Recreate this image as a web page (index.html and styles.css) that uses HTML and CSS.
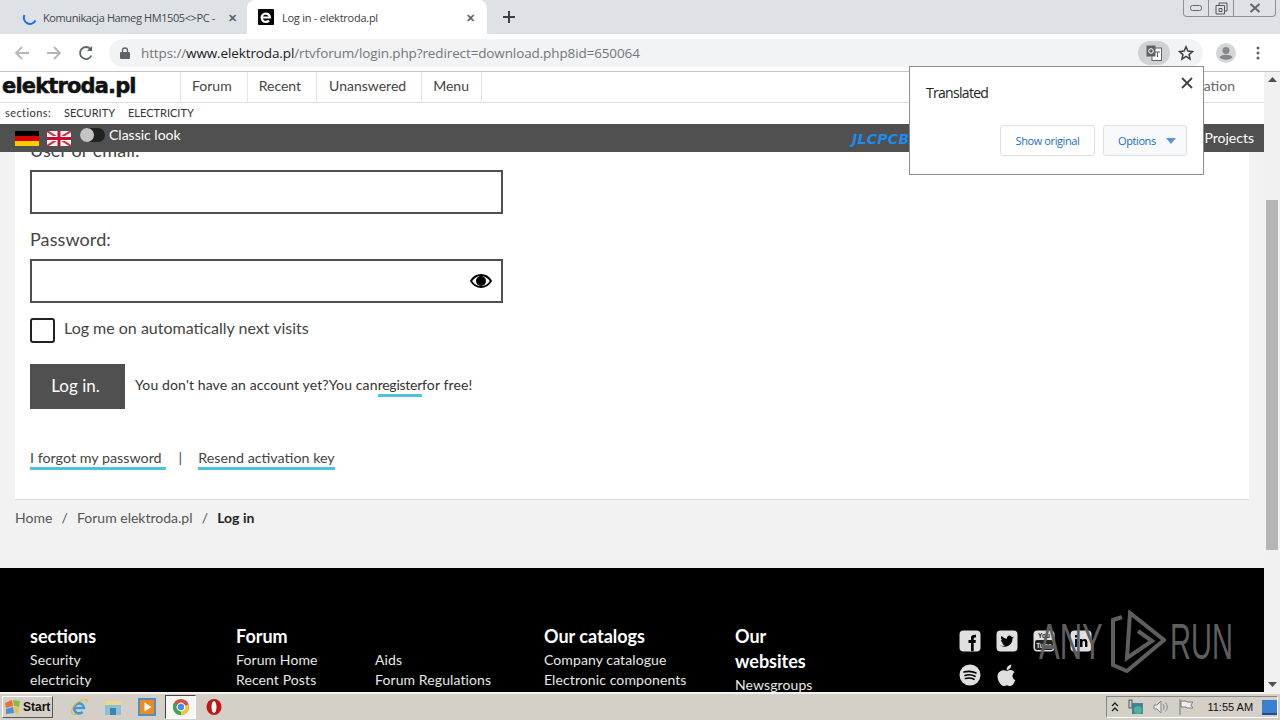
FILE: index.html
```html
<!DOCTYPE html>
<html>
<head>
    <title>Log in - elektroda.pl</title>
    <link rel="stylesheet" href="styles.css">
</head>
<body>
    <div class="tabstrip">
        <div class="tab">
            <svg class="tab-icon" width="16" height="16" viewBox="0 0 16 16"><path d="M2.500 6a6 6 0 0 0 11 5.500" fill="none" stroke="#1a73e8" stroke-width="2"/></svg>
            <span class="tab-title">Komunikacja Hameg HM1505&lt;&gt;PC -</span>
            <span class="tab-close">✕</span>
        </div>
        <div class="tab tab-active">
            <svg class="tab-icon" width="16" height="16" viewBox="0 0 16 16"><rect width="16" height="16" rx="1" fill="#000"/><path d="M3.500 8.500h8.500a4.200 4.200 0 1 0-1 3" fill="none" stroke="#fff" stroke-width="2.200"/></svg>
            <span class="tab-title">Log in - elektroda.pl</span>
            <span class="tab-close">✕</span>
        </div>
        <svg class="new-tab" width="14" height="14" viewBox="0 0 14 14"><path d="M7 1v12M1 7h12" stroke="#3c4043" stroke-width="2"/></svg>
        <div class="win-buttons">
            <span class="win-btn"><svg width="12" height="6" viewBox="0 0 12 6"><rect x=".5" y=".5" width="11" height="5" rx="2" fill="none" stroke="#666"/></svg></span>
            <span class="win-btn"><svg width="13" height="13" viewBox="0 0 13 13"><path d="M4 3V1h8v8h-2M1 3.500h8.500V12H1z M4 6.500h3v3H4z" fill="none" stroke="#555"/></svg></span>
            <span class="win-btn win-close"><svg width="12" height="10" viewBox="0 0 12 10"><path d="M1.500 1l9 8M10.500 1l-9 8" stroke="#666" stroke-width="2"/></svg></span>
        </div>
    </div>

    <div class="toolbar">
        <svg class="nav-icon" width="16" height="16" viewBox="0 0 16 16"><path d="M15 8H2M8 2 2 8l6 6" fill="none" stroke="#b4b7bb" stroke-width="1.800"/></svg>
        <svg class="nav-icon" width="16" height="16" viewBox="0 0 16 16"><path d="M1 8h13M8 2l6 6-6 6" fill="none" stroke="#b4b7bb" stroke-width="1.800"/></svg>
        <svg class="nav-icon" width="16" height="16" viewBox="0 0 16 16"><path d="M13.500 10.500A6 6 0 1 1 12.500 4" fill="none" stroke="#5f6368" stroke-width="1.800"/><path d="M14 1v5H9z" fill="#5f6368"/></svg>
        <div class="omnibox">
            <svg class="lock" width="10" height="12" viewBox="0 0 10 12"><path d="M2.500 5V3.500a2.500 2.500 0 0 1 5 0V5" fill="none" stroke="#5f6368" stroke-width="1.300"/><rect y="5" width="10" height="7" rx="1" fill="#5f6368"/></svg>
            <span class="url">https://<b>www.elektroda.pl</b>/rtvforum/login.php?redirect=download.php8id=650064</span>
            <span class="omni-right">
                <span class="translate-btn"><svg width="16" height="16" viewBox="0 0 16 16"><rect x="6" y="3" width="9.500" height="12.500" fill="#fff" stroke="#5f6368"/><rect x=".5" y=".5" width="9" height="11" fill="#5f6368"/><circle cx="5" cy="6" r="2.300" fill="none" stroke="#fff"/><path d="M9 7h5M11.500 7v5" stroke="#5f6368"/></svg></span>
                <svg class="star" width="16" height="16" viewBox="0 0 16 16"><path d="m8 1.800 1.900 4.200 4.600.5-3.400 3.100.9 4.500L8 11.300l-4 2.800.9-4.500L1.500 6.500 6.100 6z" fill="none" stroke="#3c4043" stroke-width="1.500"/></svg>
            </span>
        </div>
        <svg class="avatar" width="20" height="20" viewBox="0 0 20 20"><circle cx="10" cy="10" r="10" fill="#d5d6d8"/><circle cx="10" cy="7.500" r="3.500" fill="#85888c"/><path d="M3.500 14c2-3 11-3 13 0-2 3.500-11 3.500-13 0z" fill="#85888c"/></svg>
        <svg class="menu-dots" width="4" height="14" viewBox="0 0 4 14"><circle cx="2" cy="2" r="1.500" fill="#5f6368"/><circle cx="2" cy="7" r="1.500" fill="#5f6368"/><circle cx="2" cy="12" r="1.500" fill="#5f6368"/></svg>
    </div>

    <div class="viewport">
        <div class="page">
            <header class="site-head">
                <div class="logo">elektroda.pl</div>
                <nav class="main-nav">
                    <a>Forum</a>
                    <a>Recent</a>
                    <a>Unanswered</a>
                    <a>Menu</a>
                </nav>
                <span class="nav-right">Registration</span>
            </header>
            <div class="sections-bar">
                <span class="sections-label">sections:</span>
                <a>SECURITY</a>
                <a>ELECTRICITY</a>
            </div>
            <div class="dark-bar">
                <svg class="flag" width="24" height="15" viewBox="0 0 24 15"><rect width="24" height="5" fill="#000"/><rect y="5" width="24" height="5" fill="#d00"/><rect y="10" width="24" height="5" fill="#fc0"/></svg>
                <svg class="flag" width="24" height="15" viewBox="0 0 24 15"><rect width="24" height="15" fill="#f2eef0"/><path d="M0 0l24 15M24 0 0 15" stroke="#c8324a" stroke-width="2"/><path d="M12 0v15M0 7.500h24" stroke="#fff" stroke-width="5"/><path d="M12 0v15M0 7.500h24" stroke="#c8102e" stroke-width="3"/></svg>
                <span class="toggle"><span class="toggle-knob"></span></span>
                <span class="classic">Classic look</span>
                <span class="jlc">JLCPCB</span>
                <span class="projects">Projects</span>
            </div>
            <main class="content">
                <form class="card">
                    <label class="field-label field-label-first">User or email:</label>
                    <div class="text-input"></div>
                    <label class="field-label">Password:</label>
                    <div class="text-input">
                        <svg class="eye" width="22" height="14" viewBox="0 0 22 14"><path d="M1 7c5-8 15-8 20 0-5 8-15 8-20 0z" fill="none" stroke="#000" stroke-width="1.800"/><circle cx="11" cy="7" r="5" fill="#000"/></svg>
                    </div>
                    <div class="remember">
                        <span class="checkbox"></span>
                        <span class="remember-text">Log me on automatically next visits</span>
                    </div>
                    <div class="submit-row">
                        <span class="submit">Log in.</span>
                        <span class="register-text">You don't have an account yet?You can<a class="cyan-link">register</a>for free!</span>
                    </div>
                    <div class="help-links">
                        <a class="cyan-link">I forgot my password</a>
                        <span class="pipe">|</span>
                        <a class="cyan-link">Resend activation key</a>
                    </div>
                </form>
                <div class="crumbs">
                    <a>Home</a><span class="slash">/</span><a>Forum elektroda.pl</a><span class="slash">/</span><b>Log in</b>
                </div>
            </main>
            <footer class="site-foot">
                <div class="foot-col foot-sections">
                    <h3>sections</h3>
                    <a>Security</a>
                    <a>electricity</a>
                </div>
                <div class="foot-col foot-forum">
                    <h3>Forum</h3>
                    <a>Forum Home</a>
                    <a>Recent Posts</a>
                </div>
                <div class="foot-col foot-aids">
                    <a>Aids</a>
                    <a>Forum Regulations</a>
                </div>
                <div class="foot-col foot-catalogs">
                    <h3>Our catalogs</h3>
                    <a>Company catalogue</a>
                    <a>Electronic components</a>
                </div>
                <div class="foot-col foot-sites">
                    <h3>Our websites</h3>
                    <a>Newsgroups</a>
                </div>
                <div class="social">
                    <svg width="22" height="22" viewBox="0 0 22 22"><rect width="21" height="21" x=".5" y=".5" rx="4" fill="#e0e0e0"/><path d="M12 21v-8H9.500V10H12V8c0-2.500 1.500-3.500 5-3.300v2.700c-2 0-2.300.3-2.300 1V10h2.200l-.4 3h-1.800v8z" fill="#000"/></svg>
                    <svg width="22" height="22" viewBox="0 0 22 22"><rect width="21" height="21" x=".5" y=".5" rx="4" fill="#e0e0e0"/><path d="M4 15.500c3 2 10 2 12-4 .3-1 .4-2 .4-3L18 6.800l-2 .5-1-1.300c-2-1.500-4.500.3-4 2.800-2 0-4-1-5.500-3-1 2-.3 3.500.8 4.500l-1.300-.3c0 1.500 1 2.800 2.500 3.200l-1.300.1c.5 1.200 1.500 1.800 2.800 2-1.300.8-3 .9-5 .2z" fill="#000"/></svg>
                    <svg width="22" height="22" viewBox="0 0 22 22"><rect width="21" height="21" x=".5" y=".5" rx="4" fill="#e0e0e0"/><rect x="2" y="10" width="18" height="10" rx="2" fill="#222"/><text class="yt-you" x="11" y="8">You</text><text class="yt-tube" x="11" y="17.500">Tube</text></svg>
                    <svg width="22" height="22" viewBox="0 0 22 22"><rect width="21" height="21" x=".5" y=".5" rx="4" fill="#e0e0e0"/><path d="M5 9h2.500v8H5zM5 5h2.500v2.500H5zM10 9h2.400v1.200c1.500-2 5-1.600 5 1.800v5H15v-4.500c0-2-2.500-2-2.500 0V17H10z" fill="#000"/></svg>
                    <svg width="22" height="22" viewBox="0 0 22 22"><circle cx="11" cy="11" r="10.500" fill="#e0e0e0"/><path d="M5 8c4-1 8-1 12 1M6 11.500c3-1 7-.8 10 .8M6.500 14.500c3-.8 6-.5 8.500.8" fill="none" stroke="#000" stroke-width="1.600" stroke-linecap="round"/></svg>
                    <svg width="22" height="24" viewBox="0 0 22 24"><path d="M11 7c2-1.200 5-1.500 7.500 1.200-3 2-2.500 6.500.8 7.800-1 3-3 6-5 6-1.500 0-2-.8-3.300-.8s-2 .8-3.300.8C5 22 1.500 16.500 1.500 12.500 1.500 7.500 6.500 5 11 7z" fill="#e0e0e0"/><path d="M10.500 6c0-3 2-5 4.800-5.500.2 3-2 5.500-4.800 5.500z" fill="#e0e0e0"/></svg>
                </div>
            </footer>
        </div>
        <div class="scrollbar">
            <span class="sb-arrow"><svg width="9" height="5" viewBox="0 0 9 5"><path d="M4.500 0 9 5H0z" fill="#505050"/></svg></span>
            <div class="sb-track"><div class="sb-thumb"></div></div>
            <span class="sb-arrow"><svg width="9" height="5" viewBox="0 0 9 5"><path d="M0 0h9L4.500 5z" fill="#505050"/></svg></span>
        </div>

        <div class="translate-popup">
            <div class="popup-title">Translated</div>
            <svg class="popup-close" width="12" height="12" viewBox="0 0 12 12"><path d="M1 1l10 10M11 1 1 11" stroke="#444" stroke-width="1.800"/></svg>
            <div class="popup-buttons">
                <span class="popup-btn">Show original</span>
                <span class="popup-btn popup-options">Options<i class="caret"></i></span>
            </div>
        </div>
    </div>

    <div class="watermark">
        <span class="wm-any">ANY</span>
        <svg width="56" height="63" viewBox="0 0 56 63"><path d="M12 7 3 10v45l14 6 37-31L20 3l-3 45 25-17-14-10" fill="none" stroke="#5e5e5e" stroke-width="4"/></svg>
        <span class="wm-run">RUN</span>
    </div>

    <div class="taskbar">
        <span class="start">
            <svg width="18" height="16" viewBox="0 0 18 16"><path d="M1 4l7-3 1 6-7 2z" fill="#e8703a"/><path d="M9 1l7 1-1 6-5-1z" fill="#8dbb3f"/><path d="M2 10l7-2 1 6-8 1z" fill="#4b8fd6"/><path d="M10 8l5 1-1 6-3-1z" fill="#e8c23a"/></svg>
            Start
        </span>
        <svg class="quick" width="18" height="18" viewBox="0 0 18 18"><path d="M4 10h10a5 5 0 1 0-1.500 4" fill="none" stroke="#3d9ad6" stroke-width="2.600"/><path d="M2 15C0 11 6 3 15 1.500c2-.3 2.500 1 1.500 3M2 15c1 2 3 2 5 1" fill="none" stroke="#e4b93c" stroke-width="1.200"/></svg>
        <svg class="quick" width="18" height="18" viewBox="0 0 18 18"><rect x="1" y="3" width="16" height="5" fill="#ecd989"/><rect x="1" y="7" width="16" height="10" fill="#8cc0d8"/><rect x="6" y="10" width="6" height="7" fill="#3f85a8"/></svg>
        <svg class="quick quick-media" width="18" height="18" viewBox="0 0 18 18"><rect x="1" y="1" width="16" height="16" fill="#f08a1d" stroke="#4f8fc7" stroke-width="2"/><path d="M6.500 4.500v9L13.500 9z" fill="#fff"/></svg>
        <span class="task-active">
            <svg width="16" height="16" viewBox="0 0 16 16"><circle cx="8" cy="8" r="8" fill="#dd4b3e"/><path d="M8 8 15.500 5.500A8 8 0 0 1 8 16z" fill="#f5c533"/><path d="M8 8 8 16A8 8 0 0 1 1 4z" fill="#3ba55c"/><circle cx="8" cy="8" r="3.800" fill="#4a8af4" stroke="#fff" stroke-width="1.200"/></svg>
        </span>
        <svg class="quick" width="16" height="18" viewBox="0 0 16 18"><ellipse cx="8" cy="9" rx="7.500" ry="8" fill="#c01818"/><ellipse cx="8" cy="9" rx="2.500" ry="6" fill="#fff"/></svg>
        <div class="tray">
            <svg width="8" height="10" viewBox="0 0 8 10"><path d="M1 4l3-3 3 3M1 9l3-3 3 3" fill="none" stroke="#222" stroke-width="1.400"/></svg>
            <svg width="16" height="16" viewBox="0 0 16 16"><rect x="1" y="1" width="3" height="8" fill="none" stroke="#555"/><rect x="4" y="4" width="11" height="11" fill="#3e7fa0"/><circle cx="10" cy="11" r="4" fill="#4fb39a"/></svg>
            <svg width="16" height="14" viewBox="0 0 16 14"><path d="M1 5h3l4-4v12L4 9H1z" fill="#e8e8e8" stroke="#888"/><path d="M10 4c1.500 2 1.500 4 0 6M12.500 2.500c2.500 3 2.500 6 0 9" fill="none" stroke="#888"/></svg>
            <svg width="16" height="16" viewBox="0 0 16 16"><path d="M2 0v16" stroke="#777"/><path d="M3 2h5l1 1h6l-2 3 2 3H9L8 8H3z" fill="#efefef" stroke="#777"/></svg>
            <span class="clock">11:55 AM</span>
            <span class="show-desktop"></span>
        </div>
    </div>
</body>
</html>
```

FILE: styles.css
```css
html, body {
    margin: 0;
    height: 720px;
    overflow: hidden;
}
body {
    position: relative;
    display: flex;
    flex-direction: column;
    font-family: Lato, Arial, sans-serif;
    color: #333;
    background: #fff;
}
a {
    color: inherit;
}

/* browser chrome */
.tabstrip {
    height: 34px;
    flex: none;
    display: flex;
    align-items: stretch;
    padding-left: 8px;
    background: #dee1e6;
    font-family: "Open Sans", Arial, sans-serif;
    font-size: 11px;
    letter-spacing: -0.4px;
    color: #45484c;
}
.tab {
    width: 239px;
    box-sizing: border-box;
    display: flex;
    align-items: center;
    padding: 0 10px 0 14px;
}
.tab-active {
    width: 240px;
    padding: 0 12px 0 11px;
    background: #fff;
    border-radius: 8px 8px 0 0;
    color: #3c4043;
    letter-spacing: -0.25px;
}
.tab-icon {
    flex: none;
    margin-right: 5px;
}
.tab-active .tab-icon {
    margin-right: 8px;
}
.tab-title {
    flex: 1;
    white-space: nowrap;
    overflow: hidden;
}
.tab-close {
    font-size: 11px;
    font-weight: bold;
    color: #5f6368;
}
.new-tab {
    align-self: center;
    margin-left: 15px;
}
.win-buttons {
    margin-left: auto;
    margin-right: 4px;
    display: flex;
    align-self: flex-start;
    height: 16px;
    border: 1px solid #8b8f96;
    border-top: 0;
    border-radius: 0 0 4px 4px;
}
.win-btn {
    width: 24px;
    display: flex;
    align-items: center;
    justify-content: center;
    border-left: 1px solid #8b8f96;
}
.win-btn:first-child {
    border-left: 0;
}
.win-close {
    width: 41px;
}
.toolbar {
    height: 38px;
    flex: none;
    box-sizing: border-box;
    display: flex;
    align-items: center;
    padding: 0 0 0 14px;
    background: #fff;
    border-bottom: 1px solid #c4c4c4;
}
.nav-icon {
    flex: none;
    margin-right: 16px;
}
.omnibox {
    width: 1094px;
    height: 28px;
    flex: none;
    margin-left: -1px;
    padding-left: 11px;
    box-sizing: border-box;
    display: flex;
    align-items: center;
    background: #f1f3f4;
    border-radius: 14px;
    font-family: "Open Sans", Arial, sans-serif;
    font-size: 13.5px;
    letter-spacing: -0.12px;
    color: #73777b;
}
.lock {
    margin-right: 11px;
}
.url b {
    font-weight: normal;
    color: #202124;
}
.omni-right {
    margin-left: auto;
    display: flex;
    align-items: center;
}
.translate-btn {
    width: 32px;
    height: 24px;
    border-radius: 12px;
    background: #d0d2d4;
    display: flex;
    align-items: center;
    justify-content: center;
}
.star {
    margin: 0 9px 0 8px;
}
.avatar {
    margin-left: 13px;
    flex: none;
}
.menu-dots {
    margin-left: 20px;
    flex: none;
}

/* page */
.viewport {
    flex: 1;
    min-height: 0;
    display: flex;
    position: relative;
}
.page {
    flex: 1;
    min-width: 0;
    display: flex;
    flex-direction: column;
    background: #f2f2f2;
}
.site-head {
    height: 31px;
    flex: none;
    box-sizing: border-box;
    display: flex;
    align-items: stretch;
    padding-left: 2px;
    background: #fff;
    border-bottom: 1px solid #ddd;
}
.logo {
    width: 178px;
    font-family: "DejaVu Sans", Arial, sans-serif;
    font-weight: bold;
    font-size: 21px;
    letter-spacing: -0.85px;
    line-height: 28px;
    color: #111;
    -webkit-text-stroke: 0.5px #111;
}
.main-nav {
    display: flex;
    font-size: 14px;
    color: #444;
    line-height: 28px;
}
.main-nav a {
    padding: 0 15px 0 12px;
    border-left: 1px solid #e4e4e4;
}
.main-nav a:first-child {
    padding: 0 15px 0 11px;
}
.main-nav a:nth-child(2) {
    padding-left: 11px;
}
.main-nav a:last-child {
    padding: 0 12px 0 11px;
    border-right: 1px solid #e4e4e4;
}
.nav-right {
    margin-left: auto;
    margin-right: 29px;
    font-size: 14px;
    line-height: 28px;
    color: #666;
}
.sections-bar {
    height: 21px;
    flex: none;
    box-sizing: border-box;
    display: flex;
    align-items: center;
    padding: 0 0 2px 5px;
    background: #fff;
    font-size: 11px;
    color: #333;
}
.sections-bar a {
    margin-left: 13px;
}
.sections-label {
    letter-spacing: 0.42px;
}
.dark-bar {
    height: 28px;
    flex: none;
    position: relative;
    z-index: 1;
    display: flex;
    align-items: center;
    padding-left: 15px;
    background: #505050;
    font-size: 14px;
    color: #fff;
}
.flag {
    margin-right: 8px;
}
.flag + .flag {
    margin-right: 9px;
}
.toggle {
    width: 25px;
    height: 14px;
    margin-right: 4px;
    margin-top: -6px;
    border-radius: 7px;
    background: #222;
    position: relative;
}
.toggle-knob {
    position: absolute;
    left: 0;
    top: 0;
    width: 14px;
    height: 14px;
    border-radius: 50%;
    background: #c4c4c4;
}
.classic {
    margin-top: -8px;
}
.jlc {
    position: absolute;
    left: 852px;
    top: 7px;
    font-family: "DejaVu Sans", Arial, sans-serif;
    font-size: 14px;
    font-weight: bold;
    font-style: italic;
    letter-spacing: 0.3px;
    color: #1a8cf0;
}
.projects {
    margin-left: auto;
    margin-right: 10px;
    margin-top: -2px;
}
.content {
    height: 416px;
    flex: none;
    padding: 0 15px;
    overflow: hidden;
}
.card {
    display: flow-root;
    height: 348px;
    box-sizing: border-box;
    padding: 0 15px;
    background: #fff;
    border-bottom: 1px solid #ddd;
    font-size: 16px;
}
.field-label {
    display: block;
    height: 29px;
    margin-top: 16px;
    font-size: 18px;
    letter-spacing: 0.1px;
    line-height: 19px;
    color: #444;
}
.field-label-first {
    margin-top: -11px;
}
.text-input {
    width: 473px;
    height: 44px;
    box-sizing: border-box;
    border: 2px solid #505050;
    display: flex;
    align-items: center;
    justify-content: flex-end;
    padding-right: 9px;
}
.remember {
    display: flex;
    align-items: center;
    margin-top: 15px;
    gap: 9px;
    color: #444;
}
.remember-text {
    margin-top: -7px;
}
.checkbox {
    width: 25px;
    height: 25px;
    box-sizing: border-box;
    border: 2px solid #222;
    border-radius: 3px;
}
.submit-row {
    display: flex;
    align-items: center;
    margin-top: 21px;
}
.submit {
    width: 95px;
    height: 45px;
    box-sizing: border-box;
    padding-right: 4px;
    line-height: 43px;
    text-align: center;
    background: #505050;
    color: #fff;
    font-size: 17px;
}
.register-text {
    margin: -4px 0 0 10px;
    font-size: 14px;
    letter-spacing: 0.13px;
}
.cyan-link {
    padding-bottom: 1px;
    border-bottom: 3px solid #4cc3dd;
}
.register-text .cyan-link {
    letter-spacing: -0.25px;
}
.help-links {
    display: flex;
    align-items: baseline;
    margin-top: 40px;
    font-size: 14.3px;
    color: #444;
}
.help-links .cyan-link:first-child {
    padding-right: 4px;
}
.pipe {
    margin: 0 16px 0 13px;
}
.crumbs {
    margin-top: 9px;
    font-size: 14px;
    color: #555;
}
.crumbs b {
    color: #222;
}
.slash {
    margin: 0 9.2px;
}

/* footer */
.site-foot {
    flex: 1;
    min-height: 0;
    overflow: hidden;
    display: flex;
    align-items: flex-start;
    padding: 56px 0 0 30px;
    background: #000;
    color: #e8e8e8;
    font-size: 14px;
    letter-spacing: 0.1px;
    line-height: 20px;
}
.foot-col h3 {
    margin: 0 0 1px;
    font-size: 18px;
    line-height: 25px;
    font-weight: bold;
    letter-spacing: 0;
    color: #fff;
}
.foot-col a {
    display: block;
}
.foot-sections {
    width: 206px;
}
.foot-forum {
    width: 139px;
}
.foot-aids {
    width: 169px;
    padding-top: 26px;
}
.foot-catalogs {
    width: 191px;
}
.foot-sites {
    width: 85px;
}
.social {
    width: 150px;
    margin: 6px 0 0 139px;
    display: flex;
    flex-wrap: wrap;
    gap: 12px 15px;
}
.yt-you, .yt-tube {
    font-family: "Liberation Sans", Arial, sans-serif;
    font-size: 6.5px;
    font-weight: bold;
    text-anchor: middle;
}
.yt-you {
    fill: #222;
}
.yt-tube {
    fill: #e0e0e0;
}
.scrollbar {
    width: 16px;
    flex: none;
    display: flex;
    flex-direction: column;
    background: #f1f1f1;
}
.sb-arrow {
    height: 15px;
    flex: none;
    display: flex;
    align-items: center;
    justify-content: center;
}
.sb-track {
    flex: 1;
    padding-top: 113px;
}
.sb-thumb {
    height: 350px;
    margin: 0 2px;
    background: #b5b5b5;
}

/* translate bubble */
.translate-popup {
    position: absolute;
    left: 909px;
    top: -6px;
    width: 295px;
    height: 109px;
    box-sizing: border-box;
    background: #fff;
    border: 1px solid #8c8c8c;
    font-family: "Open Sans", Arial, sans-serif;
    z-index: 2;
}
.popup-title {
    margin: 16px 0 0 16px;
    font-size: 14px;
    letter-spacing: -0.7px;
    color: #222;
}
.popup-close {
    position: absolute;
    right: 10px;
    top: 10px;
}
.popup-buttons {
    display: flex;
    justify-content: flex-end;
    gap: 8px;
    margin: 23px 16px 0 0;
}
.popup-btn {
    width: 95px;
    height: 31px;
    text-align: center;
    line-height: 30px;
    box-sizing: border-box;
    border: 1px solid #e0e0e0;
    border-radius: 3px;
    font-size: 11px;
    letter-spacing: -0.4px;
    color: #1a6dc4;
}
.popup-options {
    width: 84px;
    padding-left: 14px;
    display: flex;
    align-items: center;
    background: #f8f9fa;
    gap: 10px;
    line-height: normal;
}
.caret {
    width: 0;
    height: 0;
    border: 5px solid transparent;
    border-top: 6px solid #5a95dc;
    border-bottom: 0;
}

/* any.run mark */
.watermark {
    position: absolute;
    left: 1039px;
    top: 610px;
    display: flex;
    align-items: center;
    font-family: "Liberation Sans", Arial, sans-serif;
    font-size: 50px;
    color: #5e5e5e;
}
.watermark svg {
    margin-right: 4px;
}
.watermark span {
    display: inline-block;
    white-space: nowrap;
    transform-origin: left center;
}
.wm-any {
    width: 71px;
    transform: scaleX(0.62);
}
.wm-run {
    width: 60px;
    transform: scaleX(0.58);
}

/* windows taskbar */
.taskbar {
    height: 28px;
    flex: none;
    box-sizing: border-box;
    display: flex;
    align-items: center;
    padding-left: 2px;
    background: #d4d0c8;
    border-top: 2px solid #f4f2ec;
    font-family: "Liberation Sans", Arial, sans-serif;
}
.start {
    width: 51px;
    height: 22px;
    box-sizing: border-box;
    display: flex;
    align-items: center;
    gap: 1px;
    padding-left: 1px;
    margin-right: 17px;
    background: #d4d0c8;
    border: 1px solid;
    border-color: #fff #555 #555 #fff;
    font-size: 12px;
    font-weight: bold;
    color: #111;
}
.quick {
    margin-right: 16px;
    flex: none;
}
.quick-media {
    margin-right: 9px;
}
.task-active {
    width: 31px;
    height: 24px;
    margin-right: 10px;
    box-sizing: border-box;
    display: flex;
    align-items: center;
    justify-content: center;
    background: #f7f7f5;
    border: 1px solid;
    border-color: #444 #fff #fff #444;
}
.tray {
    margin-left: auto;
    margin-right: 2px;
    height: 22px;
    width: 172px;
    box-sizing: border-box;
    display: flex;
    align-items: center;
    gap: 9px;
    padding-left: 4px;
    border: 1px solid;
    border-color: #888 #fff #fff #888;
    font-size: 11px;
    color: #111;
}
.clock {
    margin-left: 5px;
    white-space: nowrap;
}
.show-desktop {
    width: 15px;
    height: 13px;
    margin-left: 0;
    background: #3a7fcf;
    border-bottom: 2px solid #1d4d8a;
}
```
